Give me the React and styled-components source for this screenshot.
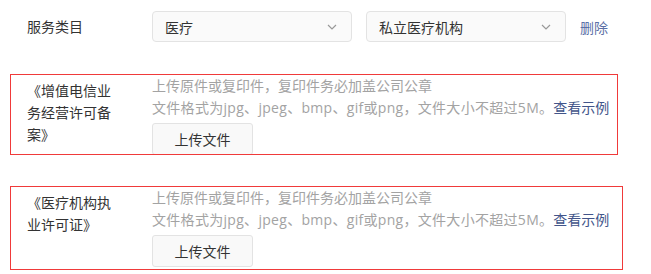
import React from 'react'
import styled, { createGlobalStyle } from 'styled-components'

const Global = createGlobalStyle`
  body {
    margin: 0;
    background: #fff;
    font-family: "Open Sans", "Noto Sans CJK SC", sans-serif;
    font-size: 14px;
    color: #333;
  }
`

const Pagina = styled.div`
  padding: 11px 0 0 10px;
`

const Linha = styled.div`
  display: flex;
  align-items: center;
  padding-left: 17px;
  height: 31px;
  margin-bottom: 32px;
`

const Rotulo = styled.div`
  width: 90px;
  margin-right: 35px;
  line-height: 22px;
  color: #333;
  flex-shrink: 0;
  padding-top: ${props => props.topo || 0}px;
`

const Seletor = styled.div`
  box-sizing: border-box;
  width: 200px;
  height: 31px;
  margin-right: 14px;
  display: flex;
  align-items: center;
  justify-content: space-between;
  padding: 0 14px 0 12px;
  background: #fafafa;
  border: 1px solid #e3e3e3;
  border-radius: 4px;
  color: #333;
`

const Link = styled.a`
  color: ${props => props.cor || '#42558a'};
  text-decoration: none;
  cursor: pointer;
  letter-spacing: 0;
`

const Bloco = styled.div`
  box-sizing: border-box;
  display: flex;
  align-items: flex-start;
  width: ${props => props.largura}px;
  height: ${props => props.altura}px;
  overflow: hidden;
  border: 1px solid #f03a3a;
  padding-left: 16px;
  & + & {
    margin-top: 31px;
  }
`

const Conteudo = styled.div`
  display: flex;
  flex-direction: column;
  align-items: flex-start;
`

const Dica = styled.div`
  line-height: 22px;
  color: #a3a3a3;
  white-space: nowrap;
  letter-spacing: ${props => props.espaco || 0}px;
`

const BotaoUpload = styled.button`
  box-sizing: border-box;
  margin-top: 4px;
  width: 101px;
  height: 32px;
  background: #f9f9f9;
  border: 1px solid #e3e3e3;
  border-radius: 3px;
  font-family: inherit;
  font-size: 14px;
  color: #333;
`

const Seta = () => (
  <svg width="10" height="6" viewBox="0 0 10 6">
    <path d="M1 1 L5 5 L9 1" fill="none" stroke="#999" strokeWidth="1.2" />
  </svg>
)

const documentos = [
  { nome: '《增值电信业务经营许可备案》', largura: 608, altura: 81 },
  { nome: '《医疗机构执业许可证》', largura: 613, altura: 84 }
]

export default function App() {
  return (
    <Pagina>
      <Global />
      <Linha>
        <Rotulo>服务类目</Rotulo>
        <Seletor>医疗<Seta /></Seletor>
        <Seletor>私立医疗机构<Seta /></Seletor>
        <Link cor="#5b6fa6">删除</Link>
      </Linha>
      {documentos.map(doc => (
        <Bloco key={doc.nome} largura={doc.largura} altura={doc.altura}>
          <Rotulo topo={5}>{doc.nome}</Rotulo>
          <Conteudo>
            <Dica>上传原件或复印件，复印件务必加盖公司公章</Dica>
            <Dica espaco={0.3}>文件格式为jpg、jpeg、bmp、gif或png，文件大小不超过5M。<Link>查看示例</Link></Dica>
            <BotaoUpload>上传文件</BotaoUpload>
          </Conteudo>
        </Bloco>
      ))}
    </Pagina>
  )
}
